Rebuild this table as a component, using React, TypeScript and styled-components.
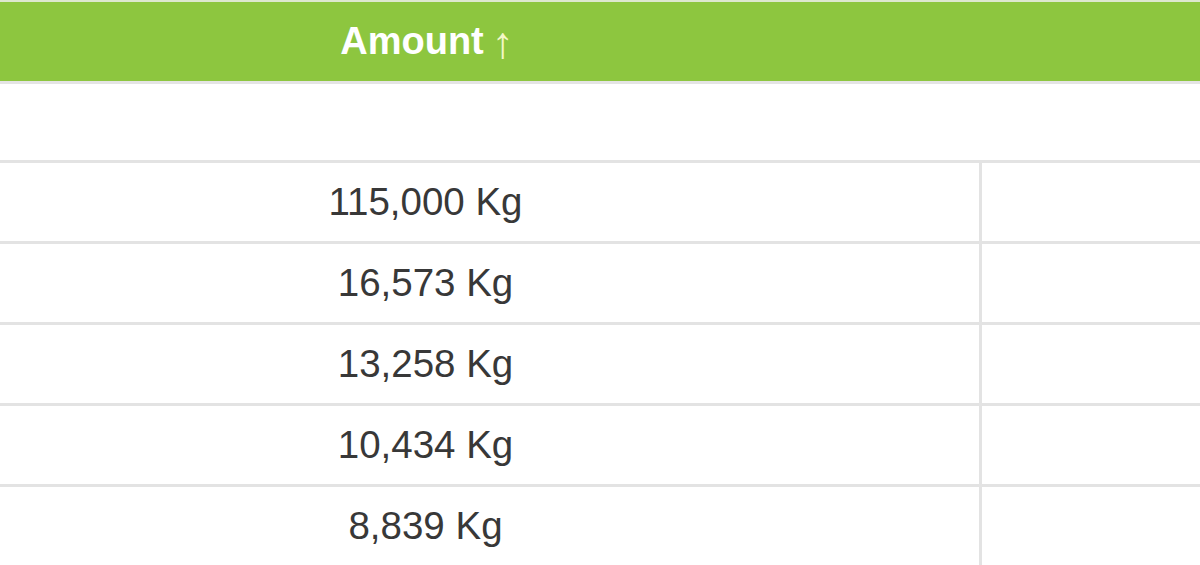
import React from 'react';
import styled, { createGlobalStyle } from 'styled-components';

const GlobalStyle = createGlobalStyle`
  *, *::before, *::after {
    box-sizing: border-box;
  }
  html, body {
    margin: 0;
    padding: 0;
    background: #ffffff;
    overflow: hidden;
  }
  body {
    font-family: 'Liberation Sans', Arial, sans-serif;
  }
`;

const Viewport = styled.div`
  width: 1200px;
  height: 565px;
  overflow: hidden;
`;

const Grid = styled.div`
  display: grid;
  grid-template-columns: 1110px 600px;
  margin-left: -128px;
  width: 1710px;
`;

const HeaderCell = styled.div`
  height: 84px;
  background: #8dc63f;
  border-top: 2px solid #dde8cf;
  border-bottom: 3px solid #e4e4e4;
  display: flex;
  align-items: center;
  justify-content: center;
  color: #ffffff;
  font-weight: bold;
  font-size: 38px;
`;

const SortArrow = styled.span`
  color: #f4f8c8;
  font-weight: normal;
  margin-left: 8px;
  font-size: 44px;
  line-height: 1;
  transform: translateY(1px);
`;

const FilterCell = styled.div`
  height: 76px;
`;

const Cell = styled.div<{ $last?: boolean }>`
  height: 81px;
  border-top: 3px solid #e3e3e3;
  border-right: ${(p) => (p.$last ? 'none' : '3px solid #e3e3e3')};
  display: flex;
  align-items: center;
  justify-content: center;
  color: #383838;
  font-size: 38.5px;
`;

const amounts = ['115,000 Kg', '16,573 Kg', '13,258 Kg', '10,434 Kg', '8,839 Kg'];

const App = () => {
  return (
    <>
      <GlobalStyle />
      <Viewport>
        <Grid>
          <HeaderCell>
            Amount<SortArrow>↑</SortArrow>
          </HeaderCell>
          <HeaderCell />
          <FilterCell />
          <FilterCell />
          {amounts.map((a) => (
            <React.Fragment key={a}>
              <Cell>{a}</Cell>
              <Cell $last />
            </React.Fragment>
          ))}
        </Grid>
      </Viewport>
    </>
  );
};

export default App;
